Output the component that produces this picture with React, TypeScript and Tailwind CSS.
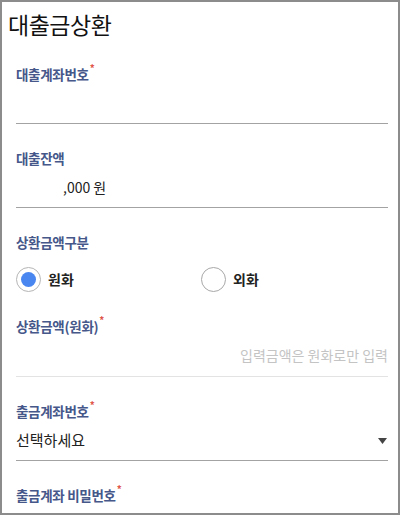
import { ReactNode } from 'react';

function Label({ children, required }: { children: ReactNode; required?: boolean }) {
  return (
    <div className="h-5 flex items-center text-[13.5px] font-bold text-[#46578a] tracking-[-0.3px]">
      {children}
      {required && <span className="self-start -mt-[1px] ml-[1px] text-[10px] leading-none text-[#e0564b]">*</span>}
    </div>
  );
}

function Field({ label, required, children }: { label: string; required?: boolean; children?: ReactNode }) {
  return (
    <div className="mt-6 first:mt-0">
      <Label required={required}>{label}</Label>
      <div className="h-[40px] border-b border-[#a3a3a3] flex items-center">{children}</div>
    </div>
  );
}

export default function App() {
  return (
    <div
      className="w-[400px] h-[515px] bg-white border-2 border-[#8c8c8c] overflow-hidden"
      style={{ fontFamily: '"Noto Sans CJK KR", "Noto Sans", sans-serif' }}
    >
      {/* 제목 */}
      <h1 className="pl-[6px] pt-[8px] text-[23px] leading-[28px] text-[#111] tracking-[-0.5px]">대출금상환</h1>

      <div className="pl-[14px] pr-[10px] pt-[26px]">
        <Field label="대출계좌번호" required />

        <Field label="대출잔액">
          <span className="pl-[47px] text-[14px] text-[#222]">,000 원</span>
        </Field>

        {/* 상환금액구분 */}
        <div className="mt-6">
          <Label>상환금액구분</Label>
          <div className="mt-3 h-[30px] flex items-center">
            <label className="w-[185px] flex items-center gap-[7px]">
              <span className="w-[25px] h-[25px] rounded-full border border-[#b5b5b5] flex items-center justify-center">
                <span className="w-[15px] h-[15px] rounded-full bg-[#4a86f0]" />
              </span>
              <span className="text-[14px] font-bold text-[#222]">원화</span>
            </label>
            <label className="flex items-center gap-[7px]">
              <span className="w-[25px] h-[25px] rounded-full border border-[#a8a8a8]" />
              <span className="text-[14px] font-bold text-[#222]">외화</span>
            </label>
          </div>
        </div>

        <div className="mt-[22px]">
          <Label required>상환금액(원화)</Label>
          <div className="h-[41px] border-b border-[#e3e3e3] flex items-center justify-end">
            <span className="text-[14px] text-[#c4c4c4] pb-[2px]">입력금액은 원화로만 입력</span>
          </div>
        </div>

        <Field label="출금계좌번호" required>
          <span className="text-[15px] text-[#222]">선택하세요</span>
          <svg className="ml-auto mr-[1px]" width="9" height="6" viewBox="0 0 9 6">
            <path d="M0 0h9L4.5 6z" fill="#444" />
          </svg>
        </Field>

        <Field label="출금계좌 비밀번호" required />
      </div>
    </div>
  );
}
